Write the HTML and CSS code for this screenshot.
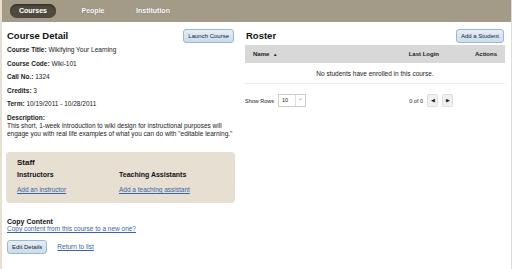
FILE: index.html
```html
<!DOCTYPE html>
<html lang="en">
<head>
<meta charset="UTF-8" />
<title>Course Detail</title>
<link rel="stylesheet" href="styles.css">
</head>
<body>
<div class="page">
  <nav class="tabs">
    <a class="tab active" href="#">Courses</a>
    <a class="tab" href="#">People</a>
    <a class="tab" href="#">Institution</a>
  </nav>

  <div class="columns">
    <section class="detail">
      <div class="head-row">
        <h2>Course Detail</h2>
        <button class="btn">Launch Course</button>
      </div>
      <p class="field"><b>Course Title:</b> Wikifying Your Learning</p>
      <p class="field"><b>Course Code:</b> Wiki-101</p>
      <p class="field"><b>Call No.:</b> 1324</p>
      <p class="field"><b>Credits:</b> 3</p>
      <p class="field"><b>Term:</b> 10/19/2011 - 10/28/2011</p>
      <p class="field desc"><b>Description:</b><br>This short, 1-week introduction to wiki design for instructional purposes will engage you with real life examples of what you can do with "editable learning."</p>

      <div class="staff">
        <h3>Staff</h3>
        <div class="staff-cols">
          <div class="staff-col">
            <h4>Instructors</h4>
            <a href="#">Add an instructor</a>
          </div>
          <div class="staff-col">
            <h4>Teaching Assistants</h4>
            <a href="#">Add a teaching assistant</a>
          </div>
        </div>
      </div>

      <div class="copy">
        <h4>Copy Content</h4>
        <a href="#">Copy content from this course to a new one?</a>
      </div>

      <div class="actions">
        <button class="btn">Edit Details</button>
        <a href="#">Return to list</a>
      </div>
    </section>

    <section class="roster">
      <div class="head-row">
        <h2>Roster</h2>
        <button class="btn">Add a Student</button>
      </div>
      <table class="grid">
        <thead>
          <tr>
            <th class="name">Name <span class="sort">&#9650;</span></th>
            <th class="login">Last Login</th>
            <th class="act">Actions</th>
          </tr>
        </thead>
        <tbody>
          <tr><td colspan="3" class="empty">No students have enrolled in this course.</td></tr>
        </tbody>
      </table>
      <div class="pager">
        <div class="rows">
          <span>Show Rows</span>
          <span class="select"><span class="val">10</span><span class="arrow">&#8964;</span></span>
        </div>
        <div class="pages">
          <span>0 of 0</span>
          <span class="pg">&#9664;</span>
          <span class="pg">&#9654;</span>
        </div>
      </div>
    </section>
  </div>
</div>
</body>
</html>
```

FILE: styles.css
```css
body {
  margin: 0;
  font-family: "Liberation Sans", Arial, sans-serif;
  font-size: 6.5px;
  color: #222;
  background: #fff;
}
.page {
  border-left: 2px solid #e6dfd2;
  border-right: 1px solid #ddd;
  min-height: 269px;
  box-sizing: border-box;
}
.tabs {
  background: #a39b88;
  height: 22px;
  display: flex;
  align-items: center;
  padding-left: 8px;
  gap: 14px;
}
.tab {
  color: #fff;
  font-weight: bold;
  font-size: 7px;
  text-decoration: none;
  width: 46px;
  height: 14px;
  line-height: 14px;
  border-radius: 7px;
  text-shadow: 0 0 1px #666;
  text-align: center;
}
.tab.active {
  background: #4f4a3e;
  box-shadow: inset 0 1px 2px #2d2a23;
}
.columns {
  display: flex;
  padding: 6px 6px 0 4px;
  gap: 10px;
}
.detail {
  width: 229px;
}
.roster {
  flex: 1;
}
.head-row {
  display: flex;
  justify-content: space-between;
  align-items: flex-start;
}
h2 {
  font-size: 9.5px;
  margin: 2px 0 0 1px;
  color: #111;
}
.btn {
  font-family: inherit;
  font-size: 6px;
  color: #222;
  background: linear-gradient(#e4eef8, #c9dcef);
  border: 1px solid #9fb6cc;
  border-radius: 3px;
  padding: 3px 4px;
  margin-top: 1px;
  margin-right: 1px;
  height: 14px;
}
.field {
  margin: 0;
  padding: 0 1px;
  line-height: 8px;
  margin-top: 5.5px;
}
.detail .field:first-of-type {
  margin-top: 3px;
}
.desc {
  margin-top: 6px;
}
.staff {
  background: #e6dfd2;
  border-radius: 4px;
  margin-top: 14px;
  padding: 6px 10px 0 11px;
  height: 45px;
}
h3 {
  font-size: 8px;
  margin: 0;
  color: #111;
}
h4 {
  font-size: 7px;
  margin: 0;
  color: #111;
}
.staff-cols {
  display: flex;
  margin-top: 4px;
}
.staff-col {
  width: 102px;
}
.staff-col a {
  display: block;
  margin-top: 8px;
}
a {
  color: #3866a6;
}
.copy {
  margin-top: 15px;
  padding-left: 1px;
}
.copy a {
  display: block;
}
.actions {
  display: flex;
  align-items: center;
  gap: 9px;
  margin-top: 7px;
  padding-left: 1px;
}
.grid {
  width: 100%;
  border-collapse: collapse;
  margin-top: 2px;
}
.grid th {
  background: #d8d8d8;
  height: 18px;
  font-size: 6px;
  text-align: left;
  padding: 0 8px;
  color: #222;
}
.grid th.login {
  text-align: right;
  padding-right: 20px;
}
.grid th.act {
  text-align: right;
  width: 30px;
}
.sort {
  font-size: 4.5px;
  margin-left: 2px;
}
.empty {
  text-align: center;
  height: 18px;
  border-bottom: 1px solid #eee;
}
.pager {
  display: flex;
  justify-content: space-between;
  align-items: center;
  margin-top: 10px;
  padding-right: 52px;
  font-size: 5.5px;
}
.rows, .pages {
  display: flex;
  align-items: center;
  gap: 3px;
}
.select {
  display: flex;
  border: 1px solid #ccc;
  height: 11px;
  width: 26px;
  margin-left: 1px;
}
.select .val {
  flex: 1;
  padding: 2px 3px;
}
.select .arrow {
  width: 9px;
  border-left: 1px solid #ddd;
  text-align: center;
  color: #6b8fc0;
  font-size: 6px;
  line-height: 6px;
}
.pg {
  width: 9px;
  height: 11px;
  border: 1px solid #ddd;
  background: #f0f0f0;
  border-radius: 2px;
  font-size: 4.5px;
  display: flex;
  align-items: center;
  justify-content: center;
  margin-left: 1px;
}
```
